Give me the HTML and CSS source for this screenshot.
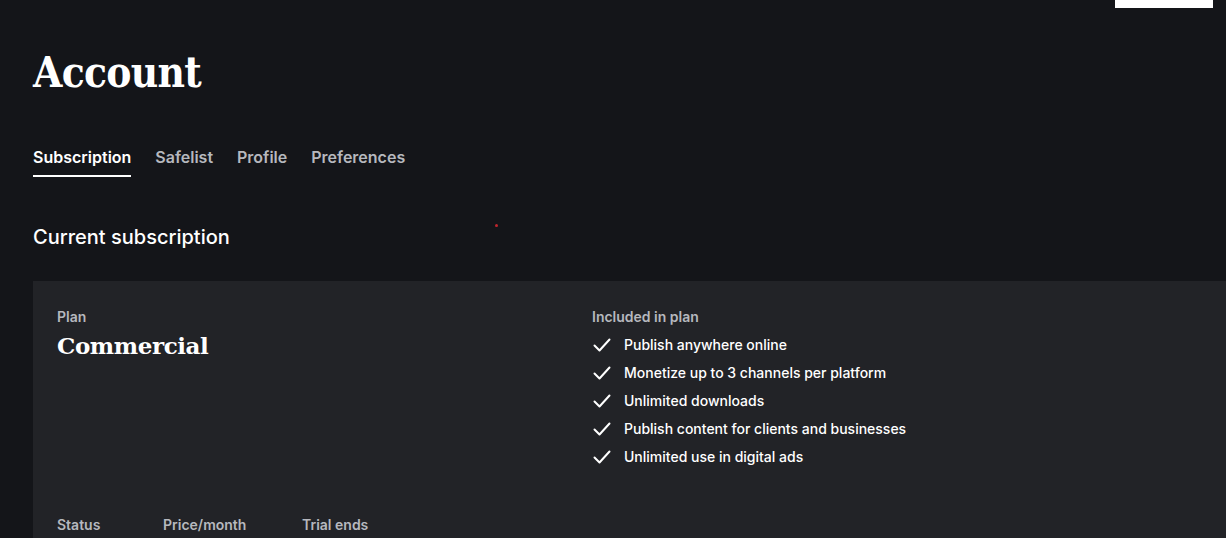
FILE: index.html
```html
<!DOCTYPE html>
<html lang="en">
<head>
  <meta charset="UTF-8" />
  <meta name="viewport" content="width=device-width, initial-scale=1.0">
  <title>Account</title>
  <link rel="stylesheet" href="styles.css">
</head>
<body>

  <!-- top bar -->
  <div class="topbar">
    <a href="#" class="topbar-btn"></a>
  </div>

  <main class="container">
    <h1>Account</h1>

    <!-- tabs -->
    <nav class="tabs">
      <a href="#" class="active">Subscription</a>
      <a href="#">Safelist</a>
      <a href="#">Profile</a>
      <a href="#">Preferences</a>
    </nav>

    <section class="subscription">
      <h2>Current subscription</h2>
      <span class="dot"></span>

      <div class="plan-card">
        <div class="plan-main">
          <div class="plan-info">
            <div class="label">Plan</div>
            <div class="plan-name">Commercial</div>
          </div>
          <div class="plan-features">
            <div class="label">Included in plan</div>
            <ul>
              <li><svg viewBox="0 0 20 20"><path d="M2.5 10.5 L7.5 15.5 L17.5 4.5" /></svg>Publish anywhere online</li>
              <li><svg viewBox="0 0 20 20"><path d="M2.5 10.5 L7.5 15.5 L17.5 4.5" /></svg>Monetize up to 3 channels per platform</li>
              <li><svg viewBox="0 0 20 20"><path d="M2.5 10.5 L7.5 15.5 L17.5 4.5" /></svg>Unlimited downloads</li>
              <li><svg viewBox="0 0 20 20"><path d="M2.5 10.5 L7.5 15.5 L17.5 4.5" /></svg>Publish content for clients and businesses</li>
              <li><svg viewBox="0 0 20 20"><path d="M2.5 10.5 L7.5 15.5 L17.5 4.5" /></svg>Unlimited use in digital ads</li>
            </ul>
          </div>
        </div>

        <div class="plan-stats">
          <div class="stat"><div class="label">Status</div></div>
          <div class="stat"><div class="label">Price/month</div></div>
          <div class="stat"><div class="label">Trial ends</div></div>
        </div>
      </div>
    </section>
  </main>

</body>
</html>
```

FILE: styles.css
```css
/* base */
* {
  box-sizing: border-box;
}
html, body {
  overflow: hidden;
}
body {
  margin: 0;
  background: #141519;
  color: #fff;
  font-family: Inter, "Noto Sans", sans-serif;
}

/* top bar (button cut off at the top) */
.topbar {
  display: flex;
  justify-content: flex-end;
  padding-right: 13px;
}
.topbar-btn {
  display: block;
  width: 98px;
  height: 8px;
  background: #fff;
}

.container {
  padding: 0 0 0 33px;
}

h1 {
  font-family: "DejaVu Serif Condensed", "DejaVu Serif", serif;
  font-stretch: condensed;
  font-weight: 700;
  font-size: 42px;
  letter-spacing: -0.7px;
  line-height: 42px;
  margin: 44px 0 0;
}

/* tabs */
.tabs {
  display: flex;
  gap: 24px;
  margin-top: 53px;
}
.tabs a {
  color: #b6b8be;
  text-decoration: none;
  font-size: 16px;
  font-weight: 600;
  line-height: 20px;
  padding-bottom: 8px;
  border-bottom: 2px solid transparent;
}
.tabs a.active {
  color: #fff;
  border-bottom-color: #fff;
}

/* subscription */
.subscription {
  position: relative;
  margin-top: 48px;
}
h2 {
  font-size: 20px;
  font-weight: 500;
  line-height: 24px;
  margin: 0 0 32px;
}
.dot {
  position: absolute;
  left: 462px;
  top: -1px;
  width: 3px;
  height: 3px;
  border-radius: 50%;
  background: #c0262d;
}

.plan-card {
  width: 100%;
  background: #222327;
  padding: 27px 24px 20px;
}
.plan-main {
  display: grid;
  grid-template-columns: 511px 1fr;
  gap: 24px;
}
.label {
  color: #b6b8be;
  font-size: 14px;
  font-weight: 600;
  line-height: 18px;
}
.plan-name {
  font-family: "DejaVu Serif", serif;
  font-weight: 700;
  font-size: 23px;
  letter-spacing: -0.4px;
  margin-top: 6px;
}

.plan-features ul {
  list-style: none;
  margin: 5px 0 0;
  padding: 0;
}
.plan-features li {
  display: flex;
  align-items: center;
  gap: 12px;
  font-size: 14px;
  font-weight: 500;
  line-height: 28px;
}
.plan-features svg {
  width: 20px;
  height: 20px;
  fill: none;
  stroke: #fff;
  stroke-width: 2;
  stroke-linecap: round;
  stroke-linejoin: round;
}

.plan-stats {
  display: flex;
  margin-top: 45px;
}
.stat:nth-child(1) { width: 106px; }
.stat:nth-child(2) { width: 139px; }
```
